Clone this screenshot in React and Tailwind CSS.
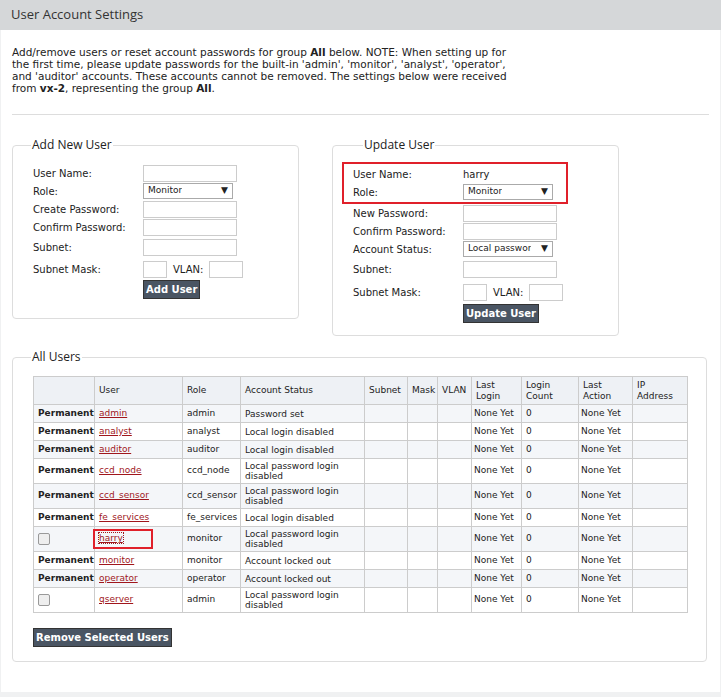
import React from 'react';

const rows = [
  { perm: true, user: 'admin', role: 'admin', status: 'Password set' },
  { perm: true, user: 'analyst', role: 'analyst', status: 'Local login disabled' },
  { perm: true, user: 'auditor', role: 'auditor', status: 'Local login disabled' },
  { perm: true, user: 'ccd_node', role: 'ccd_node', status: 'Local password login disabled' },
  { perm: true, user: 'ccd_sensor', role: 'ccd_sensor', status: 'Local password login disabled' },
  { perm: true, user: 'fe_services', role: 'fe_services', status: 'Local login disabled' },
  { perm: false, user: 'harry', role: 'monitor', status: 'Local password login disabled', mark: true },
  { perm: true, user: 'monitor', role: 'monitor', status: 'Account locked out' },
  { perm: true, user: 'operator', role: 'operator', status: 'Account locked out' },
  { perm: false, user: 'qserver', role: 'admin', status: 'Local password login disabled' },
];

const Input = ({ w = 'w-[94px]' }) => <div className={`${w} h-[17px] border border-[#ccc] bg-white`} />;

const Select = ({ label, w = 'w-[90px]' }) => (
  <div className={`${w} h-[16px] border border-[#aaa] bg-white flex items-center justify-between px-1 text-[9px]`}>
    <span className="overflow-hidden whitespace-nowrap">{label}</span>
    <span className="text-[9px]">▼</span>
  </div>
);

const Btn = ({ children }) => (
  <div className="inline-block bg-[#4a5563] text-white text-[10px] font-bold px-[2px] py-[1px] border border-[#333]">{children}</div>
);

const Row = ({ label, children, h = 'h-[18px]' }) => (
  <div className={`flex items-center ${h}`}>
    <div className="w-[110px]">{label}</div>
    {children}
  </div>
);

export default function App() {
  return (
    <div className="w-[721px] h-[697px] overflow-hidden bg-[#f0f1f2] text-[#222] text-[10px]" style={{ fontFamily: '"DejaVu Sans", Verdana, sans-serif' }}>
      <div className="h-[30px] bg-[#d5d7d9] flex items-center px-[11px] text-[13px] text-[#333]" style={{ fontFamily: '"Open Sans", sans-serif' }}>
        User Account Settings
      </div>
      <div className="bg-white mx-[1px] h-[662px] px-[11px] pt-[16px]">
        <p className="leading-[12px] w-[500px] text-[10.5px]">
          Add/remove users or reset account passwords for group <b>All</b> below. NOTE: When setting up for the first time, please update passwords for the built-in 'admin', 'monitor', 'analyst', 'operator', and 'auditor' accounts. These accounts cannot be removed. The settings below were received from <b>vx-2</b>, representing the group <b>All</b>.
        </p>
        <div className="border-t border-[#ddd] mt-[20px]" />
        <div className="flex gap-[33px] mt-[21px]">
          <fieldset className="w-[287px] h-[183px] border border-[#ddd] rounded-[4px] pl-[20px] pt-[10px]">
            <legend className="text-[12px] px-[1px] -ml-[2px]" style={{ fontFamily: '"Open Sans", sans-serif' }}>Add New User</legend>
            <Row label="User Name:"><Input /></Row>
            <Row label="Role:"><Select label="Monitor" /></Row>
            <Row label="Create Password:"><Input /></Row>
            <Row label="Confirm Password:"><Input /></Row>
            <Row label="Subnet:" h="h-[22px]"><Input /></Row>
            <Row label="Subnet Mask:" h="h-[22px]">
              <Input w="w-[24px]" /><span className="mx-[6px]">VLAN:</span><Input w="w-[34px]" />
            </Row>
            <div className="ml-[110px]"><Btn>Add User</Btn></div>
          </fieldset>
          <fieldset className="w-[287px] h-[200px] border border-[#ddd] rounded-[4px] pl-[20px] pt-[8px]">
            <legend className="text-[12px] px-[1px] ml-[10px]" style={{ fontFamily: '"Open Sans", sans-serif' }}>Update User</legend>
            <div className="border-2 border-[#e0202a] -ml-[11px] w-[226px] pl-[9px] py-[1px]">
              <Row label="User Name:">harry</Row>
              <Row label="Role:"><Select label="Monitor" /></Row>
            </div>
            <Row label="New Password:"><Input /></Row>
            <Row label="Confirm Password:"><Input /></Row>
            <Row label="Account Status:"><Select label="Local passwor" /></Row>
            <Row label="Subnet:" h="h-[22px]"><Input /></Row>
            <Row label="Subnet Mask:" h="h-[24px]">
              <Input w="w-[24px]" /><span className="mx-[6px]">VLAN:</span><Input w="w-[34px]" />
            </Row>
            <div className="ml-[110px]"><Btn>Update User</Btn></div>
          </fieldset>
        </div>
        <fieldset className="mt-[12px] w-[695px] h-[314px] border border-[#ddd] rounded-[4px] pl-[20px] pt-[10px]">
          <legend className="text-[12px] px-[1px] -ml-[2px]" style={{ fontFamily: '"Open Sans", sans-serif' }}>All Users</legend>
          <table className="border-collapse w-[654px] text-[9px] table-fixed">
            <thead>
              <tr className="bg-[#eef1f5] h-[28px] text-left align-middle">
                {['', 'User', 'Role', 'Account Status', 'Subnet', 'Mask', 'VLAN', 'Last Login', 'Login Count', 'Last Action', 'IP Address'].map((h, i) => (
                  <th key={i} className={`border border-[#ccc] font-normal px-[4px] leading-[11px] ${['w-[61px]','w-[88px]','w-[58px]','w-[124px]','w-[43px]','w-[30px]','w-[34px]','w-[50px]','w-[57px]','w-[54px]','w-[55px]'][i]}`}>{h}</th>
                ))}
              </tr>
            </thead>
            <tbody>
              {rows.map((r, i) => (
                <tr key={r.user} className={`${i % 2 ? 'bg-white' : 'bg-[#f4f6f9]'} ${r.status.length > 22 ? 'h-[25px]' : 'h-[18px]'} whitespace-nowrap`}>
                  <td className="border border-[#ccc] px-[4px] font-bold">
                    {r.perm ? 'Permanent' : <div className="w-[12px] h-[12px] border border-[#999] rounded-[2px] bg-[#eee]" />}
                  </td>
                  <td className="border border-[#ccc] px-[4px]">
                    {r.mark ? (
                      <span className="inline-block border-2 border-[#e0202a] -ml-[6px] pl-[4px] pr-[28px] py-[1px]">
                        <span className="text-[#a0161c] underline outline-dotted outline-1 outline-[#a0161c]">{r.user}</span>
                      </span>
                    ) : (
                      <span className="text-[#a0161c] underline">{r.user}</span>
                    )}
                  </td>
                  <td className="border border-[#ccc] px-[4px]">{r.role}</td>
                  <td className="border border-[#ccc] px-[4px] leading-[10px] whitespace-normal">{r.status}</td>
                  <td className="border border-[#ccc]"></td>
                  <td className="border border-[#ccc]"></td>
                  <td className="border border-[#ccc]"></td>
                  <td className="border border-[#ccc] px-[2px]">None Yet</td>
                  <td className="border border-[#ccc] px-[4px]">0</td>
                  <td className="border border-[#ccc] px-[2px]">None Yet</td>
                  <td className="border border-[#ccc]"></td>
                </tr>
              ))}
            </tbody>
          </table>
          <div className="mt-[15px]"><Btn>Remove Selected Users</Btn></div>
        </fieldset>
      </div>
    </div>
  );
}
